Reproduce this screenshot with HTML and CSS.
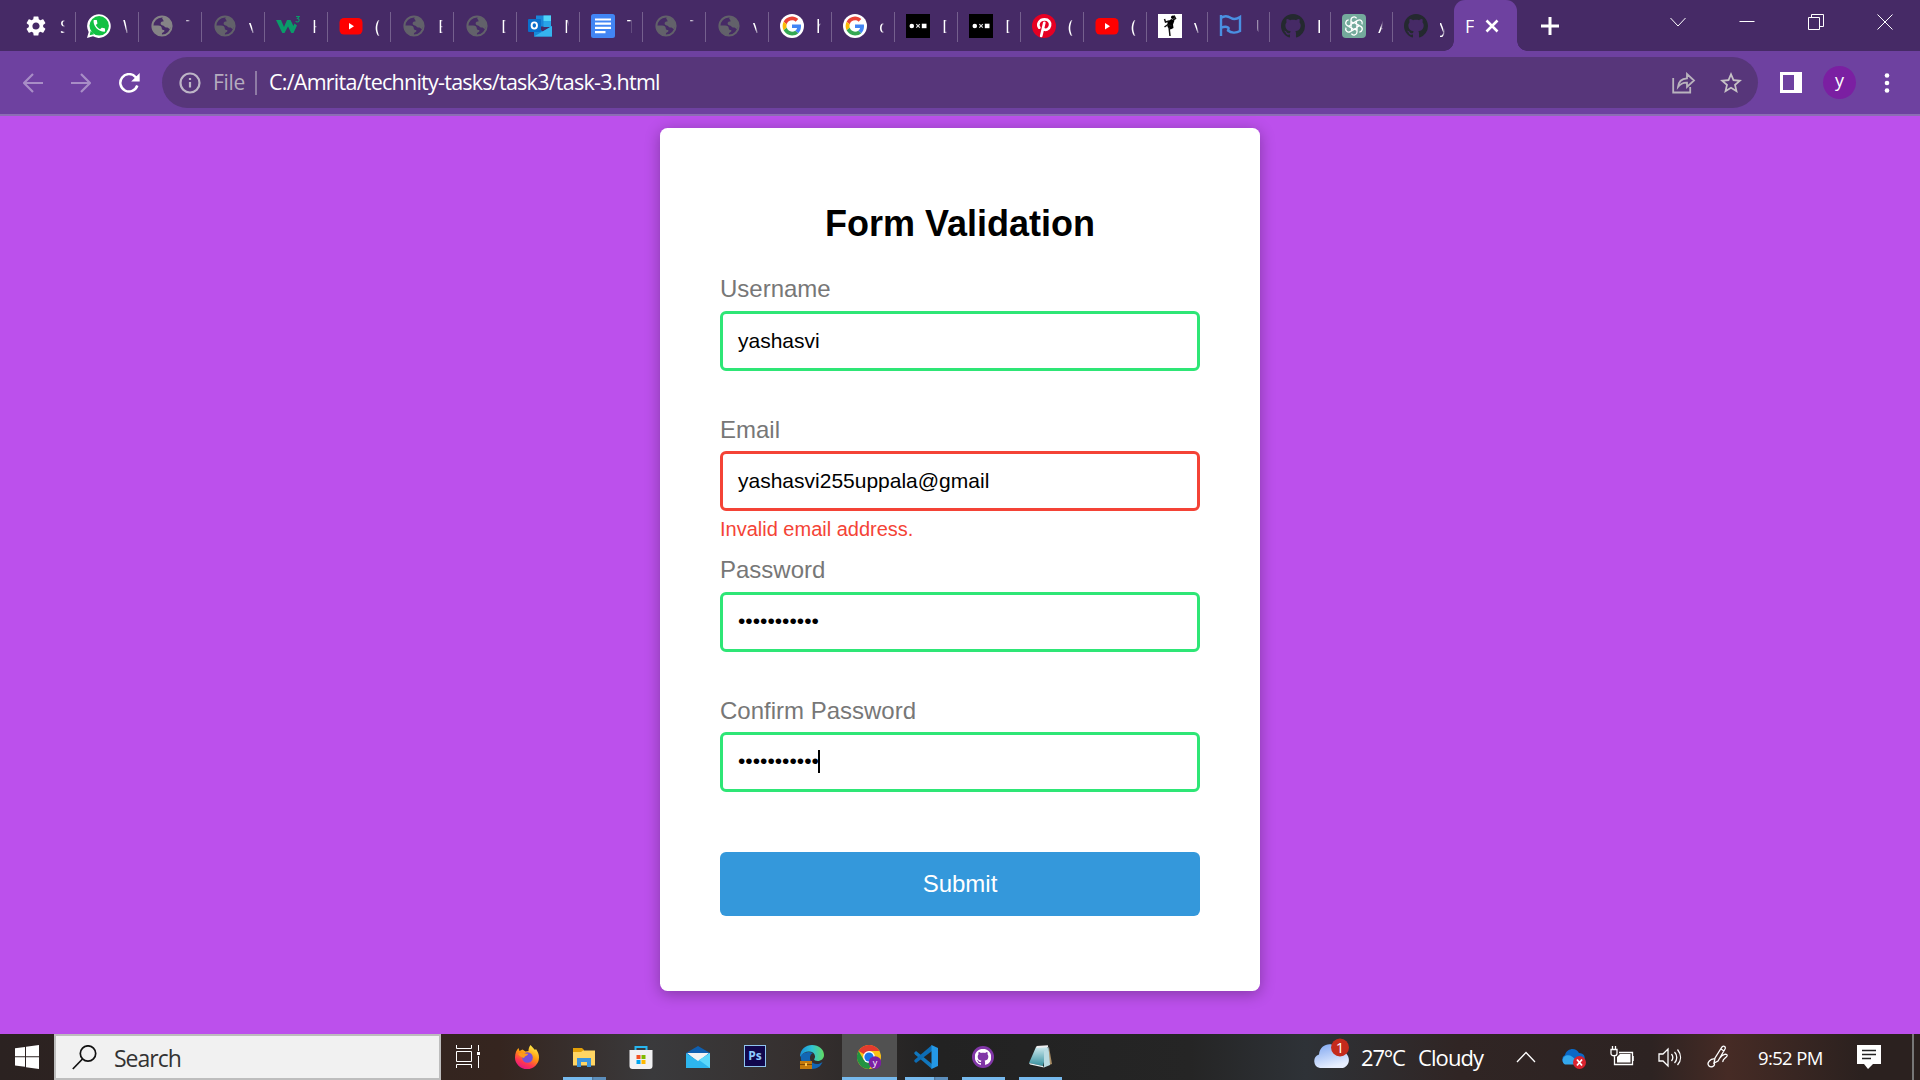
FILE: index.html
```html
<!DOCTYPE html>
<html lang="en">
<head>
<meta charset="utf-8">
<title>Form Validation</title>
<link rel="stylesheet" href="styles.css">
</head>
<body>
<svg class="defs" width="0" height="0">
  <symbol id="globe" viewBox="0 0 24 24"><circle cx="12" cy="12" r="9.6" fill="none" stroke="currentColor" stroke-width="2"/><path fill="currentColor" d="M13.5 2.5c4 .5 8 4 8 9.500l-2 3.200c-.8-1-1.500-1.700-3.200-1.700-2 0-1.800-1.800-3.300-2-1.500-.2-2.400-.7-2.400-2.200 0-1.700 1.600-1.800 2.900-1.900.2-1.800-1.300-2-1.300-3.200zM2.400 11.500h5.800c2.300 0 3.600 1.100 3.600 3 0 1.500 1.300 1.200 2.100 1.600 1.100.6.500 2-.6 2.200-1.500.3-1.500 1.500-1.300 3.200-5 .1-9.600-4-9.600-10z"/></symbol>
  <symbol id="youtube" viewBox="0 0 24 24"><rect x=".5" y="4" width="23" height="16.500" rx="4.500" fill="#f00"/><path d="M10 9v6.500l5-3.250z" fill="#fff"/></symbol>
  <symbol id="google" viewBox="0 0 24 24"><circle cx="12" cy="12" r="12" fill="#fff"/><g transform="translate(2.600 2.600) scale(.392)"><path fill="#EA4335" d="M24 9.500c3.540 0 6.710 1.220 9.210 3.600l6.850-6.850C35.900 2.380 30.470 0 24 0 14.620 0 6.510 5.380 2.560 13.220l7.980 6.190C12.430 13.720 17.740 9.500 24 9.500z"/><path fill="#4285F4" d="M46.980 24.550c0-1.570-.15-3.090-.38-4.550H24v9.020h12.940c-.58 2.960-2.260 5.480-4.780 7.180l7.730 6c4.510-4.180 7.090-10.360 7.090-17.650z"/><path fill="#FBBC05" d="M10.530 28.590c-.48-1.450-.76-2.990-.76-4.590s.27-3.140.76-4.590l-7.980-6.190C.92 16.460 0 20.120 0 24c0 3.880.92 7.540 2.560 10.780l7.970-6.190z"/><path fill="#34A853" d="M24 48c6.480 0 11.930-2.130 15.890-5.810l-7.730-6c-2.150 1.450-4.920 2.300-8.160 2.300-6.260 0-11.570-4.220-13.470-9.910l-7.980 6.190C6.510 42.620 14.620 48 24 48z"/></g></symbol>
  <symbol id="dots" viewBox="0 0 24 24"><path d="M0 0h24v24H0z"/><circle cx="5.800" cy="12" r="2.300" fill="#fff"/><path d="M10.300 10.200l3.500 3.500m0-3.500l-3.500 3.500" stroke="#ddd" stroke-width="1.200"/><path d="M15.800 9.700h4.700v4.500h-4.700z" fill="#fff"/></symbol>
  <symbol id="github" viewBox="0 0 16 16"><path fill="currentColor" d="M8 0C3.580 0 0 3.580 0 8c0 3.540 2.290 6.530 5.470 7.590.4.070.55-.17.55-.38 0-.19-.01-.82-.01-1.490-2.010.37-2.530-.49-2.690-.94-.09-.23-.48-.94-.82-1.130-.28-.15-.68-.52-.01-.53.63-.01 1.080.58 1.230.82.72 1.210 1.870.87 2.330.66.07-.52.28-.87.51-1.070-1.780-.2-3.640-.89-3.640-3.950 0-.87.31-1.590.82-2.150-.08-.2-.36-1.020.08-2.120 0 0 .67-.21 2.200.82.64-.18 1.320-.27 2-.27s1.360.09 2 .27c1.530-1.040 2.200-.82 2.200-.82.44 1.100.16 1.920.08 2.120.51.56.82 1.270.82 2.150 0 3.070-1.870 3.750-3.650 3.950.29.25.54.73.54 1.480 0 1.070-.01 1.930-.01 2.200 0 .21.15.46.55.38A8.010 8.010 0 0 0 16 8c0-4.420-3.580-8-8-8z"/></symbol>
</svg>

<header class="tabstrip">
  <div class="tab"><svg class="fav" viewBox="0 0 24 24"><path fill="#fff" d="M19.140 12.940c.04-.3.060-.61.060-.94 0-.32-.02-.64-.07-.94l2.030-1.580a.49.49 0 0 0 .12-.61l-1.920-3.320a.488.488 0 0 0-.59-.22l-2.390.96c-.5-.38-1.030-.7-1.620-.94l-.36-2.540a.484.484 0 0 0-.48-.41h-3.840c-.24 0-.43.17-.47.41l-.36 2.540c-.59.24-1.130.57-1.620.94l-2.390-.96c-.22-.08-.47 0-.59.22L2.740 8.870c-.12.21-.08.47.12.61l2.030 1.580c-.05.3-.09.63-.09.94s.02.64.07.94l-2.030 1.580a.49.49 0 0 0-.12.61l1.920 3.320c.12.22.37.29.59.22l2.390-.96c.5.38 1.030.7 1.620.94l.36 2.540c.05.24.24.41.48.41h3.840c.24 0 .44-.17.47-.41l.36-2.540c.59-.24 1.130-.56 1.620-.94l2.390.96c.22.080.47 0 .59-.22l1.920-3.320c.12-.22.070-.47-.12-.61l-2.010-1.580zM12 15.600A3.610 3.610 0 0 1 8.400 12c0-1.980 1.620-3.600 3.600-3.600s3.600 1.620 3.600 3.600-1.620 3.600-3.600 3.600z"/></svg><span>S</span></div>
  <div class="tab"><svg class="fav" viewBox="0 0 24 24"><path d="M0 24l1.700-6A11.800 11.800 0 1 1 6 22.300z" fill="#fff"/><circle cx="12.200" cy="11.800" r="9.700" fill="#12c143"/><path d="M2.700 21.300l1-4.500 3.500 3.400z" fill="#12c143"/><path transform="translate(4.600 4.200) scale(.64)" fill="#fff" d="M6.600 10.800c1.400 2.800 3.800 5.100 6.600 6.600l2.200-2.200c.3-.3.700-.4 1-.2 1.100.4 2.300.6 3.600.6.500 0 1 .5 1 1V20c0 .5-.5 1-1 1C10.600 21 3 13.400 3 4c0-.5.5-1 1-1h3.500c.5 0 1 .5 1 1 0 1.200.2 2.400.6 3.600.1.300 0 .7-.2 1z"/></svg><span>W</span></div>
  <div class="tab"><svg class="fav light"><use href="#globe"/></svg><span class="faint">T</span></div>
  <div class="tab"><svg class="fav"><use href="#globe"/></svg><span>v</span></div>
  <div class="tab"><svg class="fav" viewBox="0 0 24 24"><path fill="#0a9b69" d="M0 6h5l3 7 3-7h3.500l3 6 1-2.500 2.500 2L17.500 19h-2.200L12 12.500 8.500 19H6.300z"/><path d="M20 2.500h3.200l-1.700 2c2.300 0 2.300 3.500-.3 3.500-.8 0-1.200-.4-1.500-.8" fill="none" stroke="#0a9b69" stroke-width="1.100"/></svg><span>H</span></div>
  <div class="tab"><svg class="fav"><use href="#youtube"/></svg><span>(</span></div>
  <div class="tab"><svg class="fav"><use href="#globe"/></svg><span>E</span></div>
  <div class="tab"><svg class="fav"><use href="#globe"/></svg><span>D</span></div>
  <div class="tab"><svg class="fav" viewBox="0 0 24 24"><path d="M8 1.500h15v11H8z" fill="#1b86d8"/><path d="M15.500 1.500H23V7h-7.500z" fill="#50d4f8"/><path d="M15.500 7H23v6h-7.500z" fill="#28a4e8"/><path d="M6 12l9 5.500L24 12v10.500H6z" fill="#1689d9"/><path d="M6 22.500L24 12v10.500z" fill="#36b4ee"/><rect y="5" width="13" height="13" rx="1" fill="#0a6fcb"/><ellipse cx="6.300" cy="11.500" rx="2.700" ry="3.100" fill="none" stroke="#fff" stroke-width="1.900"/></svg><span>M</span></div>
  <div class="tab"><svg class="fav" viewBox="0 0 24 24"><rect width="24" height="24" rx="2.500" fill="#4285f4"/><path d="M4 5.500h16M4 9.700h16M4 13.900h16M4 18.200h10.500" stroke="#fff" stroke-width="2.200"/></svg><span>T</span></div>
  <div class="tab"><svg class="fav"><use href="#globe"/></svg><span class="faint">T</span></div>
  <div class="tab"><svg class="fav"><use href="#globe"/></svg><span>v</span></div>
  <div class="tab"><svg class="fav"><use href="#google"/></svg><span>h</span></div>
  <div class="tab"><svg class="fav"><use href="#google"/></svg><span>c</span></div>
  <div class="tab"><svg class="fav"><use href="#dots"/></svg><span>D</span></div>
  <div class="tab"><svg class="fav"><use href="#dots"/></svg><span>D</span></div>
  <div class="tab"><svg class="fav" viewBox="0 0 24 24"><circle cx="12" cy="12" r="12" fill="#e60023"/><path fill="none" stroke="#fff" stroke-width="2.700" stroke-linecap="round" d="M12.300 8.800L9.200 22M7.300 13.700C4.800 10 7.500 5.400 12.500 5.400c4.200 0 6.300 3 5.500 6.300-.8 3.900-4.800 5.500-7 2.700"/></svg><span>(</span></div>
  <div class="tab"><svg class="fav"><use href="#youtube"/></svg><span>(</span></div>
  <div class="tab narrow"><svg class="fav" viewBox="0 0 24 24"><path fill="#fff" d="M0 0h24v24H0z"/><circle cx="14.800" cy="3.300" r="1.800"/><path d="M9.500 7.500l4-2.500 3 1.500-1.500 4 .5 3.500-3 1.500-3-2.500z"/><path d="M11 7L7.500 8 6.500 5M15 6l2.500-1.500L16 1.500M11 13l1 9M14 12l-4-1.500-3.500 2.500" fill="none" stroke="#111" stroke-width="1.500"/></svg><span>v</span></div>
  <div class="tab narrow"><svg class="fav" viewBox="0 0 24 24"><path d="M2 1v21M2 4c4-3 7-2 10 0s6 1 9-1v14c-4 2.500-9 2-12-.5 1-3 1-2.500 0-3-2-1.200-4-1-7 .5" fill="none" stroke="#4a90e2" stroke-width="2.400"/></svg><span class="faint">U</span></div>
  <div class="tab narrow"><svg class="fav dark"><use href="#github"/></svg><span>I</span></div>
  <div class="tab narrow"><svg class="fav" viewBox="0 0 24 24"><rect width="24" height="24" rx="4" fill="#74aa9c"/><g fill="none" stroke="#fff" stroke-width="1.300"><path id="loop" d="M12 9.200l-3-1.700V6c0-3.200 4-4.100 5.600-1.700M9 7.500v6.200"/><use href="#loop" transform="rotate(60 12 12)"/><use href="#loop" transform="rotate(120 12 12)"/><use href="#loop" transform="rotate(180 12 12)"/><use href="#loop" transform="rotate(240 12 12)"/><use href="#loop" transform="rotate(300 12 12)"/></g></svg><span>A</span></div>
  <div class="tab narrow last"><svg class="fav dark"><use href="#github"/></svg><span>y</span></div>
  <div class="tab active"><span>F</span><svg width="14" height="14" viewBox="0 0 14 14"><path d="M1.500 1.500l11 11m0-11l-11 11" stroke="#fff" stroke-width="2.600"/></svg></div>
  <svg class="newtab" viewBox="0 0 18 18"><path d="M9 0v18M0 9h18" stroke="#fff" stroke-width="3"/></svg>
  <div class="controls">
    <svg viewBox="0 0 16 16"><path d="M.5 4L8 12l7.500-8"/></svg>
    <svg viewBox="0 0 16 16"><path d="M.5 7.500h15"/></svg>
    <svg viewBox="0 0 16 16"><path d="M.5 3.500h11v12H.5zM3.500 3.500v-3h12v12h-4"/></svg>
    <svg viewBox="0 0 16 16"><path d="M.5.5l15 15m0-15l-15 15"/></svg>
  </div>
</header>

<nav class="toolbar">
  <svg class="nav dim" viewBox="0 0 20 20"><path d="M20 10H1.500M10 1L1 10l9 9"/></svg>
  <svg class="nav dim" viewBox="0 0 20 20"><path d="M0 10h18.500M10 1l9 9-9 9"/></svg>
  <svg class="nav" viewBox="0 0 21 20"><path d="M18.300 12.500A8.700 8.700 0 1 1 16.500 4l2 2" stroke-width="2.500"/><path d="M20.700 0v8.500h-8.500z" fill="#fff" stroke="none"/></svg>
  <div class="omnibox">
    <svg class="info" viewBox="0 0 22 22"><circle cx="11" cy="11" r="9.500"/><path d="M11 10v5.500M11 6v2"/></svg>
    <span class="scheme">File</span><i class="bar"></i><span class="url">C:/Amrita/technity-tasks/task3/task-3.html</span>
    <svg class="share" viewBox="0 0 24 22"><path d="M1.200 6v14.500h17V15M6 15c.5-5 3.500-8.300 9-8.600V2l7 6.500-7 6.500v-4.300c-4-.2-6.500 1-9 4.300z"/></svg>
    <svg class="star" viewBox="2 2 20 19"><path d="M22 9.240l-7.190-.62L12 2 9.190 8.630 2 9.240l5.460 4.730L5.820 21 12 17.270 18.180 21l-1.630-7.030L22 9.240zM12 15.400l-3.760 2.270 1-4.280-3.320-2.880 4.380-.38L12 6.100l1.710 4.040 4.380.38-3.320 2.880 1 4.280L12 15.400z"/></svg>
  </div>
  <svg class="panel" viewBox="0 0 22 21"><path d="M0 0h22v21H0zM3 3v15h11V3z" fill="#fff" fill-rule="evenodd"/></svg>
  <span class="avatar">y</span>
  <svg class="more" viewBox="0 0 6 20"><circle cx="3" cy="2.500" r="2.300"/><circle cx="3" cy="10" r="2.300"/><circle cx="3" cy="17.500" r="2.300"/></svg>
</nav>

<main class="page">
  <form class="card">
    <h1>Form Validation</h1>
    <div class="group"><label>Username</label><div class="field">yashasvi</div></div>
    <div class="group"><label>Email</label><div class="field invalid">yashasvi255uppala@gmail</div><small>Invalid email address.</small></div>
    <div class="group"><label>Password</label><div class="field secret">•••••••••••</div></div>
    <div class="group"><label>Confirm Password</label><div class="field secret">•••••••••••<i class="caret"></i></div></div>
    <button type="button">Submit</button>
  </form>
</main>

<footer class="taskbar">
  <div class="start"><svg width="24" height="24" viewBox="0 0 24 24"><path fill="#fff" d="M0 3.300l10-1.400V11.300H0zM11 1.700L24 0v11.300H11zM0 12.300h10v9.500L0 20.500zM11 12.300h13V24l-13-1.800z"/></svg></div>
  <div class="search"><svg width="25" height="25" viewBox="0 0 25 25"><circle cx="16" cy="8.500" r="7.700"/><path d="M10.500 14L.8 24"/></svg><span>Search</span></div>
  <div class="apps">
    <div class="taskview"><svg viewBox="0 0 24 24"><path d="M.5 0v3.500h15V0M.5 6.500h15v10H.5zM.5 23v-3.500h15V23M22.500 0v6M22.500 11v12" fill="none" stroke="#fff"/><path d="M21 7h3v3h-3z" fill="#fff"/></svg></div>
    <div><svg viewBox="0 0 24 24"><defs><linearGradient id="fx" x1=".8" y1="0" x2=".3" y2="1"><stop offset="0" stop-color="#fff44f"/><stop offset=".45" stop-color="#ff980e"/><stop offset=".75" stop-color="#ff3750"/><stop offset="1" stop-color="#e31587"/></linearGradient></defs><path fill="url(#fx)" d="M15.500 0c1.500 2 3 3 4.500 5l1-1c2 3 3 5.500 3 8.500A12 11.500 0 0 1 0 12.500C0 8 1.500 5 3.500 3l1 3 3-1.500 3 2 3-.5c0-2 .5-4 2-6z"/><circle cx="12.500" cy="12.500" r="5.300" fill="#7650d8"/><path d="M3 9c4-3 7 0 10-.3 0 2-3 1.800-4 4.300-2-1-4-1-6-4z" fill="#ff9a1b"/></svg></div>
    <div class="open split"><svg viewBox="0 0 24 24"><path fill="#e3a008" d="M1 3h9l2 2v4H1z"/><path fill="#ffd563" d="M1 7h8l2-1.500h12v15H1z"/><path fill="#3b94dd" d="M5 22v-9h14v9h-4v-5H9v5z"/></svg></div>
    <div><svg viewBox="0 0 24 24"><path d="M6.500 6V2h11v4" fill="none" stroke="#27b7f0" stroke-width="2"/><path fill="#f1f1f3" d="M.5 5h23v16a3 3 0 0 1-3 3h-17a3 3 0 0 1-3-3z"/><path fill="#f25022" d="M7.500 10h4v4h-4z"/><path fill="#7fba00" d="M12.500 10h4v4h-4z"/><path fill="#00a4ef" d="M7.500 15h4v4h-4z"/><path fill="#ffb900" d="M12.500 15h4v4h-4z"/></svg></div>
    <div><svg viewBox="0 0 24 24"><path fill="#0f5fb0" d="M0 8l12-7 12 7v4H0z"/><path fill="#f3f3f3" d="M1 8h22l-11 9z"/><path fill="#2db6ee" d="M0 8l12 8 12-8v15H0z"/><path fill="#5bd8fb" d="M24 23V8l-11 7z"/></svg></div>
    <div class="ps"><b>Ps</b></div>
    <div><svg viewBox="0 0 24 24"><defs><linearGradient id="ed"><stop offset="0" stop-color="#1790dc"/><stop offset=".5" stop-color="#30c3d4"/><stop offset="1" stop-color="#61dc62"/></linearGradient></defs><path fill="#1266b4" d="M1 10a11 11 0 0 1 12-2c-3 1-5 7 0 10 3 2 7 1 9.500-1C20 23 15 24.500 10 23.700 3 22 0 16 1 10z"/><path fill="url(#ed)" d="M0 12C0 4 6 0 12 0c7 0 12 4.500 12 10 0 5-5 7-9 5.500-2-1 .5-2 0-4.500C14 5 4 5 0 12z"/><path fill="#c47a0d" d="M0 16h12v8H0z"/><path fill="#7c4808" d="M0 19h12v1H0z"/><path d="M5 18h2v3H5z" fill="#ffc64a"/></svg></div>
    <div class="open current"><svg viewBox="0 0 24 24"><circle cx="12" cy="12" r="12" fill="#fbc116"/><path d="M12 12L1.600 6A12 12 0 0 1 22.400 6H12z" fill="#e33b2e"/><path d="M1.600 6A12 12 0 0 0 12 24l5.200-9H6.800z" fill="#229342"/><circle cx="12" cy="12" r="5.900" fill="#fff"/><circle cx="12" cy="12" r="4.600" fill="#1a73e8"/><circle cx="18" cy="17.500" r="6.300" fill="#7b1fa2"/><text x="18" y="20.500" text-anchor="middle" fill="#fff" font-family="Open Sans" font-size="9">y</text></svg></div>
    <div class="open split"><svg viewBox="0 0 24 24"><path fill="#1177bd" d="M0 8l2-2 16 13v5L1 9.500z"/><path fill="#0d6db5" d="M0 16l2 2L18 6V0L1 14.500z"/><path fill="#2498e6" d="M17.500 0L24 3v18l-6.500 3z"/></svg></div>
    <div class="open"><svg viewBox="0 0 24 24"><circle cx="12" cy="12" r="11" fill="#8136a7"/><svg x="3.700" y="3.700" width="16.600" height="16.600" color="#fff"><use href="#github"/></svg></svg></div>
    <div class="open"><svg viewBox="0 0 24 24"><defs><linearGradient id="np" x2="0" y2="1"><stop offset="0" stop-color="#d5eef2"/><stop offset="1" stop-color="#35909f"/></linearGradient></defs><path d="M21 2l3 17-6 2z" fill="#a98d65"/><path d="M8 2l12-1-5 20-14-3z" fill="url(#np)"/><path d="M1 18l14 3 1 1.500-14-3z" fill="#e8f3f5"/><path d="M16 6l4.500-4L22 20l-6 2.500z" fill="#b9dbe2"/><path d="M8.500 2l11.500-.8" stroke="#eee" stroke-width="1.800"/></svg></div>
  </div>
  <div class="weather"><svg width="36" height="36" viewBox="0 0 36 36"><defs><linearGradient id="cl" y2="1" x2=".4"><stop offset="0" stop-color="#7da5f0"/><stop offset="1" stop-color="#e7efff"/></linearGradient></defs><path fill="url(#cl)" d="M7 35a7 7 0 0 1-1-13.500C7 9 23 8 25 18c14-1 14 17 3 17z"/><circle cx="27" cy="14.500" r="9" fill="#c42b1c"/><text x="27" y="20" font-family="Open Sans" font-size="15" text-anchor="middle" fill="#fff">1</text></svg><span class="temp">27°C</span><span class="cond">Cloudy</span></div>
  <div class="tray">
    <svg viewBox="0 0 24 24"><path d="M3 17l9-9.500 9 9.500"/></svg>
    <svg viewBox="0 0 24 24"><path d="M3 19a5 5 0 0 1 0-9C5 3 14 2 17 8c5 0 7 4 5 8l-5 3z" fill="#0a69c7" stroke="none"/><path d="M3 19.500a5 5 0 0 1 1-9c4-1 7 1 10 5v4z" fill="#34a8ed" stroke="none"/><circle cx="17.500" cy="17.500" r="6.500" fill="#d9232e" stroke="none"/><path d="M15 14.500l5 6m0-6l-5 6" stroke-width="1.800"/></svg>
    <svg viewBox="0 0 24 24"><path d="M4.500 12v7.500h18v-12H9M24 11v5M1 4.500h6v4c0 3-6 3-6 0zM2.500 1v3M5.500 1v3M4.500 11v6"/><path d="M7 12l3-3h10.500v8.500H7z" fill="#fff" stroke="none"/></svg>
    <svg viewBox="0 0 24 24"><path d="M1 9h4l5-5v17l-5-5H1zM13.500 9c1.500 2 1.500 5 0 7M16.500 7c3 3 3 8 0 11M19.500 4.500c4 5 4 11 0 15.500"/></svg>
    <svg viewBox="0 0 24 24"><path d="M8 18l1-5L16 2c2-2 4 0 3 2l-7 12-4 2zM9 14c-4-1-9 4-6 7 2 2 7 0 5-3M14 13c2-4 8-5 7-2-1 2-5 3-4 6M15 4l3 2"/></svg>
    <span class="time">9:52 PM</span>
    <svg class="note" viewBox="0 0 24 24"><path d="M0 0h24v19h-8l-5 5-4-5H0z" fill="#fff" stroke="none"/><path d="M5 5.500h14M5 9.500h14M5 13.500h9" stroke="#222" stroke-width="1.300"/></svg>
  </div>
</footer>
</body>
</html>
```
FILE: styles.css
```css
* { box-sizing: border-box; }
body {
  margin: 0;
  width: 1920px;
  height: 1080px;
  overflow: hidden;
  display: flex;
  flex-direction: column;
  font-family: "Open Sans", "Noto Sans", sans-serif;
}
svg { display: block; flex: none; }
.defs { position: absolute; }

/* Tab strip */
.tabstrip {
  height: 51px;
  flex: none;
  background: #462a66;
  display: flex;
  padding-left: 13px;
  color: #fff;
}
.tab {
  width: 63px;
  height: 51px;
  flex: none;
  display: flex;
  align-items: center;
  padding-left: 11px;
  background: linear-gradient(#75608e, #75608e) right 12px / 1px 30px no-repeat;
}
.tab span {
  width: 5px;
  margin-left: 12px;
  overflow: hidden;
  font-size: 18px;
  line-height: 26px;
  mask-image: linear-gradient(90deg, #000 50%, transparent);
}
.tab .faint { width: 4px; opacity: .7; }
.tab.narrow { width: 61.400px; }
.tab.last { background: none; }
.fav { width: 24px; height: 24px; color: #62616a; margin-top: 1px; }
.fav.light { color: #858386; }
.fav.dark { color: #24292f; }
.tab.active {
  position: relative;
  width: 63px;
  padding-left: 11px;
  background: #6e41a0;
  border-radius: 11px 11px 0 0;
}
.tab.active::before, .tab.active::after {
  content: "";
  position: absolute;
  bottom: 0;
  width: 10px;
  height: 10px;
}
.tab.active::before { left: -10px; background: radial-gradient(circle at 0 0, transparent 9.500px, #6e41a0 10px); }
.tab.active::after { right: -10px; background: radial-gradient(circle at 100% 0, transparent 9.500px, #6e41a0 10px); }
.tab.active span { margin: 0 11px 0 0; width: 9px; mask-image: none; }
.newtab { width: 18px; height: 18px; margin: 17px 0 0 24px; }
.controls { margin: 14px 27px 0 auto; display: flex; gap: 53px; }
.controls svg { width: 16px; height: 16px; fill: none; stroke: #fff; }

/* Toolbar */
.toolbar {
  height: 65px;
  flex: none;
  background: #6e41a0;
  border-bottom: 2px solid #8c6db4;
  display: flex;
  align-items: center;
  padding-left: 23px;
  color: #fff;
}
.nav { width: 20px; height: 20px; margin-right: 28px; fill: none; stroke: #fff; stroke-width: 2.200; }
.nav.dim { stroke: #a88dc6; }
.nav:nth-child(3) { width: 21px; margin-right: 22px; }
.omnibox {
  width: 1596px;
  height: 51px;
  border-radius: 26px;
  background: #57367a;
  display: flex;
  align-items: center;
  padding: 0 16px 0 17px;
}
.info { width: 22px; height: 22px; fill: none; stroke: #bdb5c6; stroke-width: 2.200; }
.scheme { width: 42px; margin: -2px 0 0 12px; font-size: 21px; letter-spacing: -.3px; color: #b5acbf; white-space: nowrap; }
.bar { width: 2px; height: 24px; background: #8f7ba5; margin-right: 12px; }
.url { margin-top: -2px; font-size: 21.500px; letter-spacing: -.75px; white-space: nowrap; }
.share { width: 24px; height: 22px; margin-left: auto; fill: none; stroke: #b9b3bd; stroke-width: 1.800; }
.star { width: 22px; height: 21px; margin-left: 24px; fill: #c6c2c6; }
.panel { width: 22px; height: 21px; margin-left: 22px; }
.avatar {
  width: 33px; height: 33px; margin-left: 21px;
  border-radius: 50%; background: #7b1fa2;
  font-size: 18px; line-height: 28px; text-align: center;
}
.more { width: 6px; height: 20px; margin-left: 28px; fill: #fff; }

/* Page */
.page {
  flex: 1;
  min-height: 0;
  background: #bc50ec;
  display: flex;
  justify-content: center;
  align-items: flex-start;
  padding-top: 12px;
  font-family: "Liberation Sans", Arial, sans-serif;
}
.card {
  width: 600px;
  height: 863px;
  padding: 75px 60px 0;
  background: #fff;
  border-radius: 7.500px;
  box-shadow: 0 3px 15px rgba(0, 0, 0, .3);
}
h1 { margin: 0 0 31.200px; font-size: 36px; line-height: 41px; text-align: center; }
.group { height: 140.500px; }
label { display: block; font-size: 24px; line-height: 27px; color: #777; margin-bottom: 8.400px; }
.field {
  height: 60px;
  border: 3px solid #2ee676;
  border-radius: 6px;
  padding: 0 15px;
  display: flex;
  align-items: center;
  font-size: 21px;
}
.field.invalid { border-color: #f44336; }
.field.secret { padding-bottom: 2px; }
.caret { width: 2px; height: 23px; background: #000; margin-left: -1px; }
small { display: block; margin-top: 6px; font-size: 20px; line-height: 24px; color: #f44336; }
button {
  display: block;
  width: 480px;
  height: 64px;
  margin-top: 14.800px;
  border: 0;
  border-radius: 6px;
  background: #3498db;
  color: #fff;
  font: 24px "Liberation Sans", Arial, sans-serif;
}

/* Taskbar */
.taskbar {
  height: 46px;
  flex: none;
  display: flex;
  background: linear-gradient(90deg, #2b2221 0, #35251f 26%, #3a3a3c 34%, #352f2e 42%, #222 49%, #252525 62%, #2e3237 68%, #302524 76%, #2d2322 86%, #462b25 90%, #2b211f 97%);
  color: #fff;
}
.start { width: 54px; padding: 11px 0 0 15px; }
.search {
  width: 387px;
  background: #f1f1f1;
  border: 2px solid #bdbdbd;
  display: flex;
  align-items: center;
  padding-left: 16px;
  color: #333;
  font-size: 23px;
}
.search svg { fill: none; stroke: #111; stroke-width: 1.700; }
.search span { margin: 1px 0 0 17px; letter-spacing: -1px; }
.apps { display: flex; padding-left: 1px; }
.apps > div { width: 57px; padding: 11px 0 0 16px; }
.apps > .taskview { padding-left: 14px; }
.apps > div > svg { width: 24px; height: 24px; }
.apps .open { background: linear-gradient(#76b9ed, #76b9ed) center bottom / 43px 3px no-repeat; }
.apps .split { background-image: linear-gradient(90deg, #76b9ed 29px, #4f7090 29px, #5c8ebb 31px); }
.apps .current { width: 55px; margin: 0 1px; padding-left: 15px; background-color: #515151; background-size: 55px 3px; }
.ps b {
  display: block;
  width: 22px; height: 22px;
  margin-left: 1px;
  border: 1.500px solid #8fc5ef;
  background: #10074d;
  color: #8ecbff;
  font-size: 12px;
  line-height: 19px;
  text-align: center;
}
.weather { display: flex; width: 200px; margin-left: 244px; font-size: 22px; line-height: 46px; white-space: nowrap; }
.weather svg { margin-top: -1px; }
.temp { width: 57px; margin-left: 12px; letter-spacing: -1.200px; }
.cond { letter-spacing: -.9px; }
.tray {
  flex: 1;
  display: flex;
  align-items: center;
  border-right: 2px solid #777;
  margin-right: 6px;
  padding-left: 1px;
}
.tray svg { width: 24px; height: 24px; fill: none; stroke: #fff; stroke-width: 1.300; margin-right: 24px; }
.time { width: 72px; font-size: 18.500px; letter-spacing: -.65px; white-space: nowrap; margin-left: 4px; }
.tray .note { margin: 0 0 0 27px; }
```
